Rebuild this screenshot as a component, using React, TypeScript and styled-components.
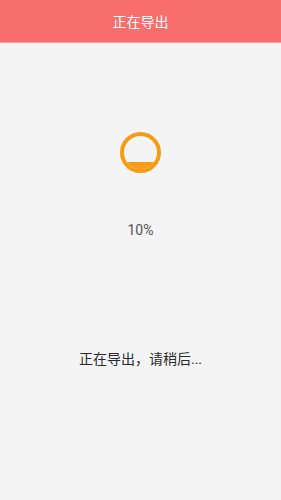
import React from 'react';
import styled, { createGlobalStyle } from 'styled-components';

const GlobalStyle = createGlobalStyle`
  html, body {
    margin: 0;
    padding: 0;
    background: #f4f4f4;
    font-family: Roboto, "Noto Sans CJK SC", sans-serif;
  }
`;

const Page = styled.div`
  min-height: 500px;
  display: flex;
  flex-direction: column;
  background: #f4f4f4;
`;

const Header = styled.header`
  height: 43px;
  background: #f76e6c;
  color: #ffffff;
  display: flex;
  align-items: center;
  justify-content: center;
  font-size: 14px;
  border-bottom: 1px solid #f2a3a2;
  box-sizing: border-box;
`;

const Body = styled.main`
  display: flex;
  flex-direction: column;
  align-items: center;
  padding-top: 89px;
`;

const Ring = styled.div`
  width: 41px;
  height: 41px;
  box-sizing: border-box;
  border: 4px solid #f59c12;
  border-radius: 50%;
  overflow: hidden;
  display: flex;
  flex-direction: column;
  justify-content: flex-end;
`;

const Fill = styled.div<{ $level: number }>`
  height: ${({ $level }) => $level}%;
  background: #f59c12;
`;

const Percent = styled.div`
  margin-top: 49px;
  font-size: 14px;
  color: #555555;
  line-height: 17px;
`;

const Message = styled.div`
  margin-top: 110px;
  font-size: 14px;
  color: #2a2a2a;
  line-height: 20px;
`;

export default function App() {
  return (
    <>
      <GlobalStyle />
      <Page>
        <Header>正在导出</Header>
        <Body>
          <Ring>
            <Fill $level={22} />
          </Ring>
          <Percent>10%</Percent>
          <Message>正在导出，请稍后...</Message>
        </Body>
      </Page>
    </>
  );
}
